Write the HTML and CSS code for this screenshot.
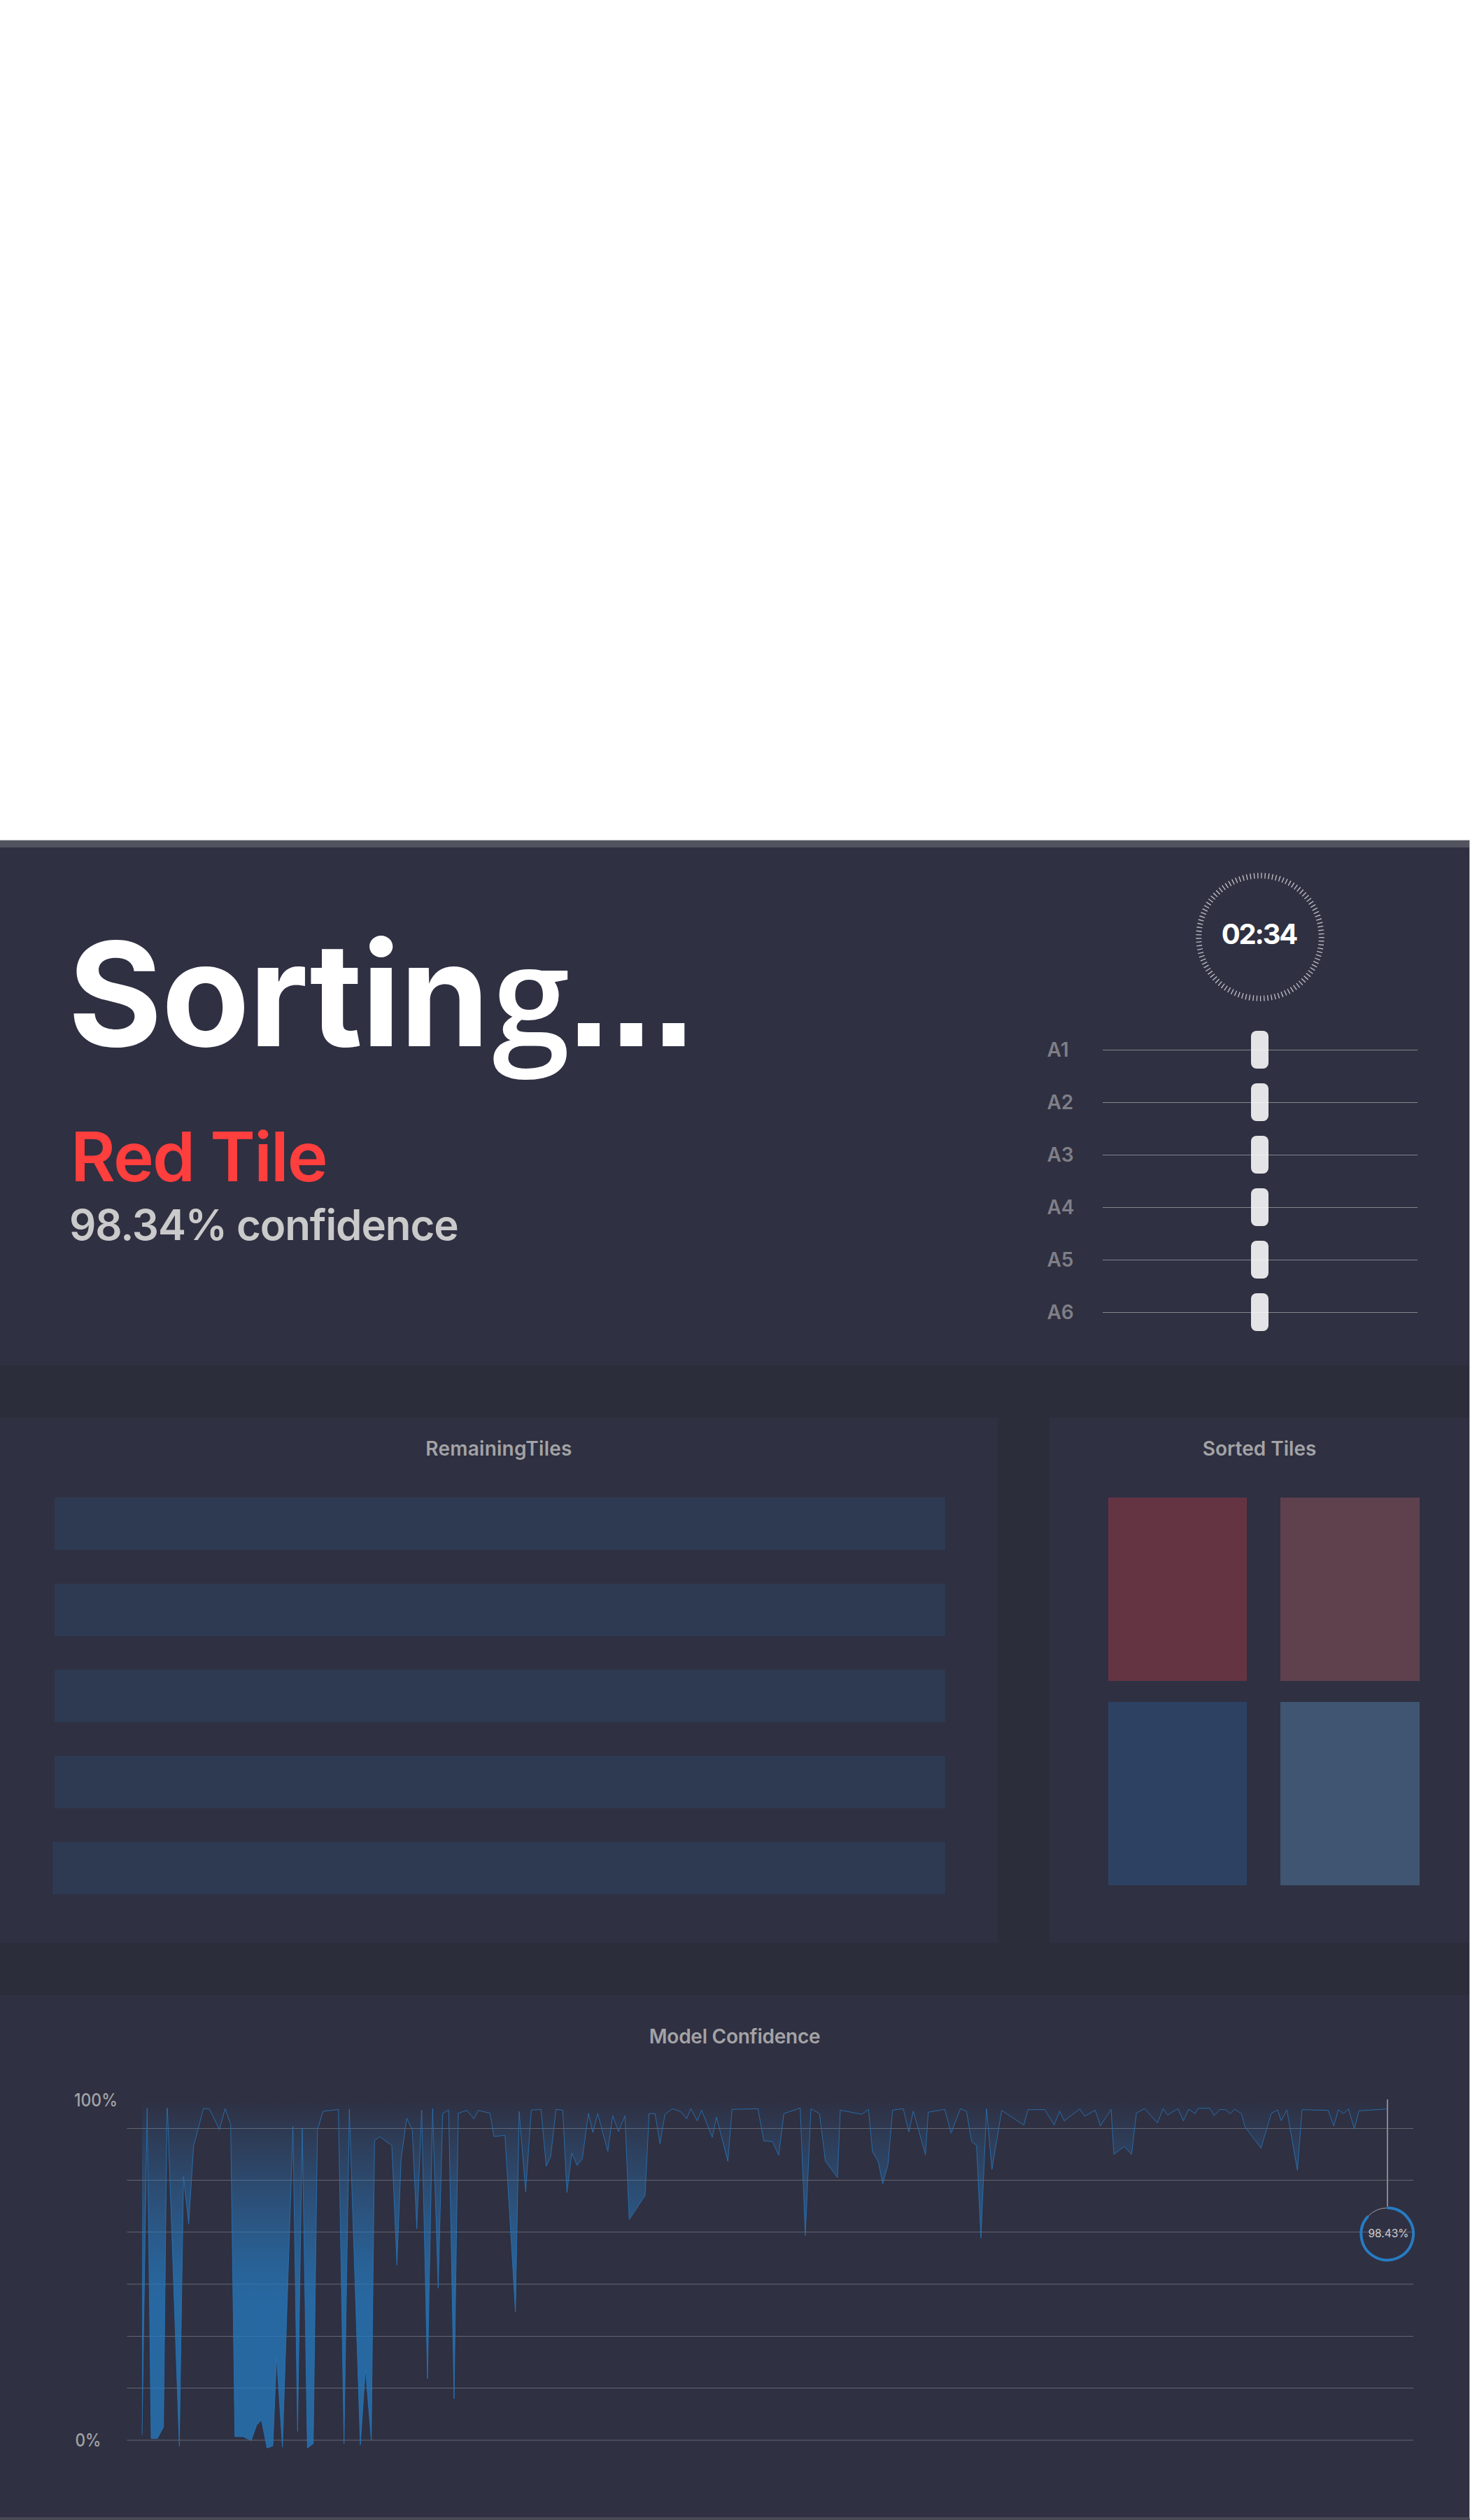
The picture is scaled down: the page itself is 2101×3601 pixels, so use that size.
FILE: index.html
```
<!DOCTYPE html>
<html lang="en">
<head>
<meta charset="utf-8">
<title>Tile Sorting Dashboard</title>
<link rel="stylesheet" href="styles.css">
</head>
<body>
<main class="dashboard">
  <section class="hero">
    <div class="status">
      <h1 class="status-title">Sortin<span class="binocular">g</span><span class="dots">...</span></h1>
      <p class="status-tile">Red Tile</p>
      <p class="status-confidence">98.34% confidence</p>
    </div>
    <div class="controls">
      <div class="timer">
        <svg class="timer-ring" viewBox="0 0 184 184"><circle cx="92" cy="92" r="87.7" pathLength="105" /></svg>
        <span class="timer-value">02:34</span>
      </div>
      <div class="slider"><span class="slider-label">A1</span><div class="track"><i class="handle"></i></div></div>
      <div class="slider"><span class="slider-label">A2</span><div class="track"><i class="handle"></i></div></div>
      <div class="slider"><span class="slider-label">A3</span><div class="track"><i class="handle"></i></div></div>
      <div class="slider"><span class="slider-label">A4</span><div class="track"><i class="handle"></i></div></div>
      <div class="slider"><span class="slider-label">A5</span><div class="track"><i class="handle"></i></div></div>
      <div class="slider"><span class="slider-label">A6</span><div class="track"><i class="handle"></i></div></div>
    </div>
  </section>
  <div class="middle">
    <section class="panel remaining">
      <h2 class="panel-title">RemainingTiles</h2>
      <div class="bars"><div class="bar"></div><div class="bar"></div><div class="bar"></div><div class="bar"></div><div class="bar bar-wide"></div></div>
    </section>
    <section class="panel sorted">
      <h2 class="panel-title">Sorted Tiles</h2>
      <div class="tiles"><div class="tile red"></div><div class="tile red-light"></div><div class="tile blue"></div><div class="tile blue-light"></div></div>
    </section>
  </div>
  <section class="confidence">
    <h2 class="panel-title">Model Confidence</h2>
    <svg class="chart" viewBox="0 2960 2100 560">
      <defs>
        <linearGradient id="area" gradientUnits="userSpaceOnUse" x1="0" y1="3000" x2="0" y2="3290">
          <stop offset="0" stop-color="#277cc4" stop-opacity="0"/>
          <stop offset="0.5" stop-color="#277cc4" stop-opacity="0.42"/>
          <stop offset="0.8" stop-color="#2579be" stop-opacity="0.67"/>
          <stop offset="1" stop-color="#2579be" stop-opacity="0.77"/>
        </linearGradient>
      </defs>
      <g class="grid">
        <path d="M181.5 3041.5H2020M181.5 3115.5H2020M181.5 3189.5H2020M181.5 3338.5H2020M181.5 3412.5H2020"/>
        <path class="grid-soft" d="M181.5 3264H2020M181.5 3487H2020"/>
      </g>
      <path id="area-fill" fill="url(#area)"/>
      <polyline id="series" class="series" points="203,3479.6 210.3,3012.5 216,3484.6 225,3484.6 233.7,3468.2 238.7,3012.5 239.3,3012.5 256.3,3495.7 262.3,3110 269.7,3177.9 276.7,3067 290.7,3013.2 299,3013.2 313.7,3043.2 321.7,3013.2 329.7,3035.7 335.7,3481.8 347.7,3482 359,3487.5 366.7,3465.7 373.7,3458.2 381.7,3498.2 390,3495 395.3,3367.9 403.7,3496.8 418.7,3038.6 425.3,3474.3 432,3041.4 439.3,3498.2 447.7,3492 453.7,3043.2 461.7,3017.1 483.7,3014.3 491.7,3492 499.3,3013.6 515,3494 522.3,3385 530.7,3487.5 535.3,3058.9 542.7,3053.2 560,3065.7 567.3,3236.8 573.3,3085 581.3,3026.8 589.3,3043.9 595.7,3185 602.7,3015.3 611,3399 618.3,3013.3 626.3,3270 632.7,3019.7 641.3,3015.3 649,3427.7 655,3019.7 667.3,3015.7 677.3,3027.7 683.7,3015.7 700.3,3019.7 706,3053 721.7,3051.3 736.7,3303.7 742,3017.3 751.3,3132.3 759.3,3015.3 773.3,3014.3 780.7,3095.3 787,3081.7 794.7,3014.3 804.3,3015.3 810.3,3133 817.3,3076.7 824.7,3094.3 832.3,3084.7 841,3020 847.3,3047.3 854.3,3020.3 868.7,3074.3 875.7,3023.3 884,3046 893.3,3023.3 899.3,3171.7 922,3137.3 927.7,3020.3 936.3,3020.3 943.3,3063.7 950.3,3021.7 960.7,3013.3 972.7,3017.3 981.3,3027.7 987.3,3013.3 996.7,3030.7 1002.7,3015.3 1018,3054.3 1024,3025.3 1040.3,3088.3 1046.3,3014.3 1083.3,3013.3 1091.7,3059.3 1104,3060.3 1113,3079.7 1120.3,3020.3 1143.7,3012.3 1151,3194.7 1159,3013.3 1171.3,3020.3 1179.7,3088.3 1197,3111.7 1201,3015.3 1231.7,3021.3 1241.3,3014.3 1247,3074.7 1255.3,3089 1261.7,3120.7 1269.3,3092.3 1275.7,3015.3 1291,3013.3 1299,3046.3 1305.3,3016.7 1322.7,3079 1326.7,3018.3 1350.3,3014.3 1359.3,3048.3 1372.7,3013.3 1381.3,3017 1388.7,3060.3 1395.7,3065.7 1402,3198 1410,3013.3 1417.7,3100 1431.7,3015.7 1463.3,3036.7 1469.3,3014.7 1493.3,3014.7 1506.7,3036.7 1514.3,3016.7 1521,3030.7 1543.3,3013.7 1550.3,3024 1565.3,3015.3 1572.7,3038 1588,3014.3 1592,3078.7 1606.7,3067.3 1617.3,3078.7 1624.3,3019.3 1636,3013.3 1654.3,3033.7 1662.3,3013.3 1668.7,3022.3 1683.7,3013.3 1691.3,3030.7 1699,3014 1708,3020.3 1712.7,3012.7 1729,3012.7 1735.3,3023 1743.3,3014.7 1752,3014.7 1758.3,3020.7 1764.7,3014 1774.3,3020.3 1779.3,3039 1802.3,3069.7 1817,3020 1826,3015 1831,3030.3 1839.3,3015.3 1854.3,3101.3 1861,3014.7 1898.3,3015.7 1906.3,3038 1912.7,3015 1920.3,3020.3 1927.3,3013.7 1935.7,3042.3 1942.3,3016.3 1982.7,3013.7"/>
      <path class="cursor" d="M1983 3000V3153"/>
      <circle class="ring-base" cx="1982.7" cy="3192.3" r="37.3"/>
      <path class="ring" d="M1982.7 3155A37.3 37.3 0 1 1 1955.4 3166.9"/>
      <text class="axis" x="106" y="3009.5" textLength="62" lengthAdjust="spacingAndGlyphs">100%</text>
      <text class="axis" x="107.5" y="3496" textLength="37" lengthAdjust="spacingAndGlyphs">0%</text>
      <text class="badge" x="1955.5" y="3197" textLength="58" lengthAdjust="spacingAndGlyphs">98.43%</text>
    </svg>
  </section>
</main>
<script src="chart.js"></script>
</body>
</html>
```
FILE: styles.css
```
* { box-sizing: border-box; margin: 0; padding: 0; }
body { background: #fff; font-family: Inter, "Liberation Sans", sans-serif; width: 2101px; }
.dashboard {
  margin-top: 1200px;
  width: 2101px;
  height: 2401px;
  background: #2b2d3b;
  border-top: 1px solid #c4c4c7;
  border-right: 1px solid #c8c8cc;
  border-bottom: 4px solid #484955;
  display: flex;
  flex-direction: column;
}
.hero { height: 750px; background: #2f3042; border-top: 10px solid #51535f; display: flex; justify-content: space-between; margin-bottom: 75px; }
.status { padding: 85px 0 0 97px; white-space: nowrap; }
.status-title { font-size: 206px; line-height: 248px; height: 248px; font-weight: 650; letter-spacing: -1.2px; color: #fff; }
.binocular { font-family: "Open Sans", sans-serif; font-size: 200px; font-weight: 650; margin-left: 5px; line-height: 1; }
.dots { font-family: "Liberation Sans", sans-serif; font-size: 220px; font-weight: 700; line-height: 1; letter-spacing: -0.5px; margin-left: -2px; }
.status-tile { margin-top: 50px; padding-left: 4px; font-size: 98px; line-height: 118px; font-weight: 600; letter-spacing: -1.8px; color: #ff3e3e; }
.status-confidence { margin-top: 2px; padding-left: 2px; font-size: 60px; line-height: 72px; font-weight: 600; letter-spacing: -1.1px; color: #cacaca; }
.controls { width: 603.5px; padding-top: 36px; }
.timer { width: 184px; height: 184px; margin: 0 0 31.5px 212px; display: grid; place-items: center; }
.timer-ring, .timer-value { grid-area: 1 / 1; }
.timer-ring { width: 184px; height: 184px; }
.timer-ring circle { fill: none; stroke: #bdbdc2; stroke-width: 8; stroke-dasharray: 0.26 0.74; }
.timer-value { font-size: 40px; line-height: 48px; font-weight: 700; letter-spacing: -2.2px; color: #fff; margin: 0 0 9px -2px; }
.slider { height: 75px; display: flex; align-items: center; }
.slider-label { width: 79px; font-size: 28px; font-weight: 600; color: #7f7f86; }
.track { width: 450px; height: 54px; display: flex; justify-content: center; background: linear-gradient(#85858c, #85858c) 0 27px / 100% 1px no-repeat; }
.handle { width: 25px; height: 54px; border-radius: 8px; background: linear-gradient(#eee, #eee) 0 27px / 100% 1px no-repeat #e4e4e6; }
.middle { height: 750px; display: flex; justify-content: space-between; margin-bottom: 75px; }
.panel { background: #2f3042; padding-top: 27px; }
.panel-title { font-size: 28px; line-height: 34px; font-weight: 600; color: #a3a3a5; text-align: center; }
.remaining { width: 1426px; }
.remaining .panel-title { letter-spacing: 0.25px; }
.sorted { width: 600px; }
.bars { margin: 53px 0 0 78px; width: 1273px; display: flex; flex-direction: column; gap: 48px; }
.bar { height: 75px; background: #2d3a52; }
.bar-wide { margin-left: -3px; }
.tiles { margin: 53px 0 0 84px; display: grid; grid-template-columns: 198px 198.5px; grid-auto-rows: 262px; gap: 30px 48px; }
.red { background: #653443; }
.red-light { background: #5e414d; }
.blue { background: #2d4262; }
.blue-light { background: #3f5571; }
.confidence { flex: 1; background: #2f3042; padding-top: 42px; }
.confidence .panel-title { letter-spacing: -0.25px; }
.chart { display: block; width: 2100px; height: 560px; margin-top: 33px; }
.grid path { fill: none; stroke: #64656f; stroke-width: 1; }
.grid .grid-soft { stroke: #4a4b59; stroke-width: 2; }
.series { fill: none; stroke: #2774b6; stroke-opacity: 0.85; stroke-width: 1; stroke-linejoin: bevel; }
.cursor { stroke: #89898d; stroke-width: 2; }
.ring-base { fill: none; stroke: #a0a0a5; stroke-width: 1; }
.ring { fill: none; stroke: #277bc2; stroke-width: 4; }
.axis { font-size: 26px; font-weight: 500; fill: #a3a3a5; }
.badge { font-size: 16px; fill: #ccc; }
```
FILE: chart.js
```
// The area runs from the top of the plot down to the series line.
const points = document.getElementById("series").getAttribute("points");
document.getElementById("area-fill").setAttribute("d", "M203,3000 L" + points + " V3000 Z");
```
